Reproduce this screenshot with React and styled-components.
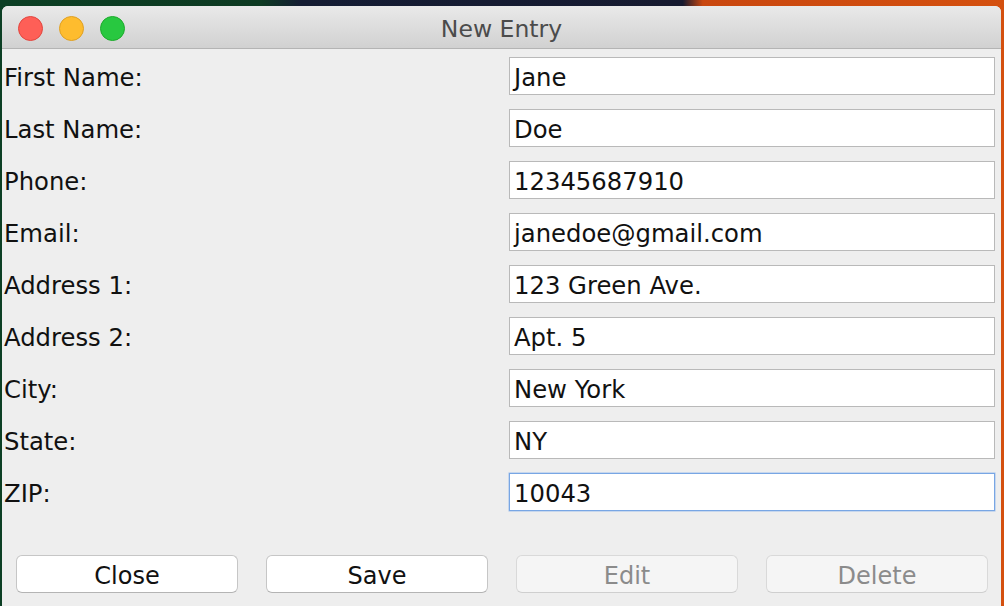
import React from "react";
import styled, { createGlobalStyle } from "styled-components";

const GlobalStyle = createGlobalStyle`
  html, body {
    margin: 0;
    padding: 0;
    width: 1004px;
    height: 606px;
    overflow: hidden;
  }
  body {
    background: linear-gradient(90deg, #0c3f24 0%, #0d3a22 26%, #141c33 30%, #161a30 68%, #c9470f 70%, #d4500f 100%);
    font-family: "DejaVu Sans", "Liberation Sans", sans-serif;
  }
`;

const fields = [
  { label: "First Name:", value: "Jane" },
  { label: "Last Name:", value: "Doe" },
  { label: "Phone:", value: "12345687910" },
  { label: "Email:", value: "janedoe@gmail.com" },
  { label: "Address 1:", value: "123 Green Ave." },
  { label: "Address 2:", value: "Apt. 5" },
  { label: "City:", value: "New York" },
  { label: "State:", value: "NY" },
  { label: "ZIP:", value: "10043", focused: true },
];

const buttons = [
  { text: "Close" },
  { text: "Save" },
  { text: "Edit", disabled: true },
  { text: "Delete", disabled: true },
];

function App() {
  return (
    <>
      <GlobalStyle />
      <Desktop>
        <Window>
          <TitleBar>
            <Lights>
              <Light color="#fe5f57" ring="#e2463f" />
              <Light color="#febc2e" ring="#dfa023" />
              <Light color="#28c840" ring="#1cab2b" />
            </Lights>
            <Title>New Entry</Title>
            <span />
          </TitleBar>
          <Body>
            <Form>
              {fields.map((f) => (
                <React.Fragment key={f.label}>
                  <Label>{f.label}</Label>
                  <Field focused={f.focused}>{f.value}</Field>
                </React.Fragment>
              ))}
            </Form>
            <ButtonRow>
              {buttons.map((b) => (
                <Button key={b.text} disabled={b.disabled}>
                  {b.text}
                </Button>
              ))}
            </ButtonRow>
          </Body>
        </Window>
      </Desktop>
    </>
  );
}

export default App;

const Desktop = styled.div`
  padding: 6px 3px 0 2px;
  height: 600px;
`;

const Window = styled.div`
  height: 100%;
  background: #eeeeee;
  border-radius: 6px 6px 0 0;
  overflow: hidden;
  display: flex;
  flex-direction: column;
`;

const TitleBar = styled.div`
  height: 42px;
  display: grid;
  grid-template-columns: 1fr auto 1fr;
  align-items: center;
  background: linear-gradient(#e9e9e9, #d1d1d1);
  border-bottom: 1px solid #b4b4b4;
  padding: 0 16px;
`;

const Lights = styled.div`
  display: flex;
  gap: 16px;
  padding-top: 2px;
`;

const Light = styled.span`
  width: 23px;
  height: 23px;
  border-radius: 50%;
  background: ${(p) => p.color};
  border: 0.5px solid ${(p) => p.ring};
`;

const Title = styled.div`
  font-size: 23.5px;
  color: #4b4b4b;
  padding-top: 3px;
`;

const Body = styled.div`
  display: flex;
  flex-direction: column;
  padding: 8px 6px 0 2px;
`;

const Form = styled.div`
  display: grid;
  grid-template-columns: 505px 1fr;
  grid-auto-rows: 38px;
  row-gap: 14px;
  align-items: center;
`;

const Label = styled.div`
  font-size: 24.3px;
  color: #111;
  line-height: 38px;
  padding-top: 4px;
`;

const Field = styled.div`
  height: 38px;
  box-sizing: border-box;
  background: #fff;
  border: 1px solid ${(p) => (p.focused ? "#78a6e4" : "#b9b9b9")};
  box-shadow: ${(p) => (p.focused ? "0 0 0 0.5px #9fc0ec" : "none")};
  padding: 3px 4px 0;
  font-size: 24.3px;
  line-height: 34px;
  color: #111;
  white-space: nowrap;
`;

const ButtonRow = styled.div`
  display: grid;
  grid-template-columns: repeat(4, 222px);
  column-gap: 28px;
  padding: 44px 0 0 12px;
`;

const Button = styled.div`
  height: 38px;
  box-sizing: border-box;
  border-radius: 6px;
  background: ${(p) => (p.disabled ? "#f5f5f5" : "#ffffff")};
  border: 1px solid ${(p) => (p.disabled ? "#d9d9d9" : "#c6c6c6")};
  border-bottom-color: ${(p) => (p.disabled ? "#cfcfcf" : "#b4b4b4")};
  color: ${(p) => (p.disabled ? "#8b8b8b" : "#111")};
  font-size: 24px;
  display: flex;
  align-items: center;
  justify-content: center;
  padding-top: 3px;
`;
